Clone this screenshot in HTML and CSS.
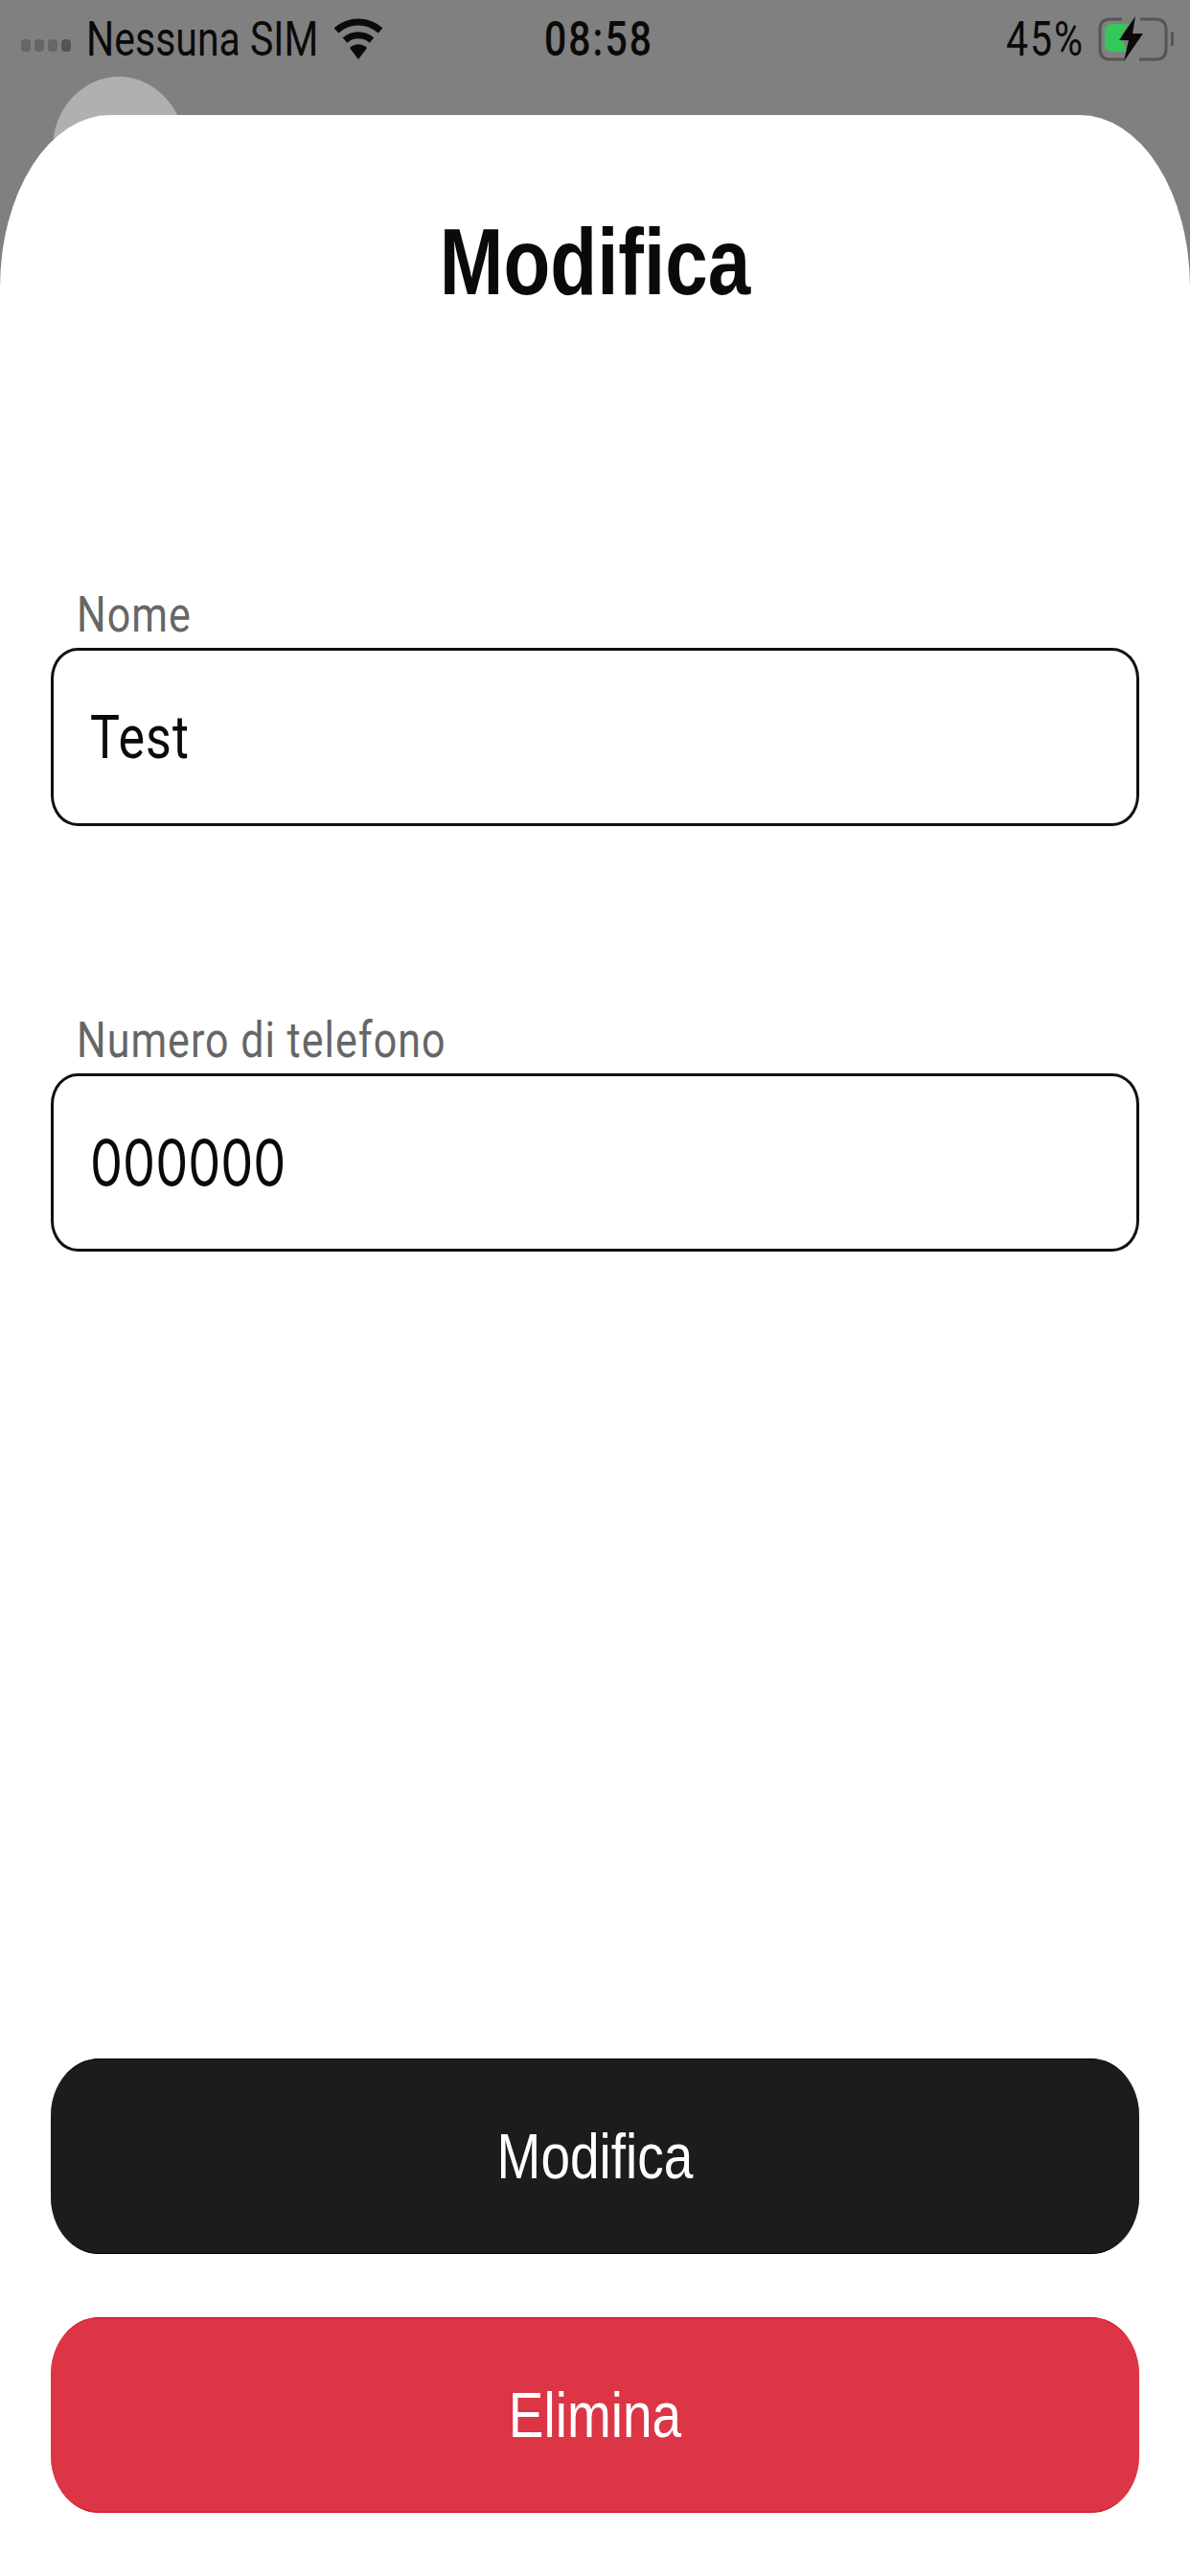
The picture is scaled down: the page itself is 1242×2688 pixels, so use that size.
FILE: index.html
```html
<!DOCTYPE html>
<html lang="it">
<head>
<meta charset="UTF-8">
<meta name="viewport" content="width=device-width, initial-scale=1.0">
<title>Modifica</title>
<link rel="stylesheet" href="styles.css">
</head>
<body>
<div class="screen">
    <div class="status-bar">
        <div class="status-left">
            <div class="signal">
                <span class="signal-dot"></span>
                <span class="signal-dot"></span>
                <span class="signal-dot"></span>
                <span class="signal-dot dark"></span>
            </div>
            <span class="stretch carrier">Nessuna SIM</span>
            <svg class="wifi" width="50" height="46" viewBox="0 0 50 46">
                <path d="M2 15 C15 3 35 3 48 15" fill="none" stroke="#0a0a0a" stroke-width="7"/>
                <path d="M11 25 C19 18 31 18 39 25" fill="none" stroke="#0a0a0a" stroke-width="7"/>
                <path d="M16 33 C21 28 29 28 34 33 L25 45 Z" fill="#0a0a0a"/>
            </svg>
        </div>
        <span class="stretch time">08:58</span>
        <div class="status-right">
            <span class="stretch percent">45%</span>
            <svg class="battery" width="82" height="48" viewBox="0 0 82 48">
                <path d="M25 3 H13 Q2 3 2 14 V34 Q2 45 13 45 H27 M43 45 H60 Q71 45 71 34 V14 Q71 3 60 3 H44" fill="none" stroke="#555" stroke-width="3"/>
                <path d="M15 8 H32 L24 20 L30 37 H15 Q7 37 7 29 V16 Q7 8 15 8 Z" fill="#34c759"/>
                <path d="M39 0 L22 25 H32 L27 47 L47 18 H36 Z" fill="#0a0a0a"/>
                <rect x="76" y="16" width="3" height="15" rx="1.5" fill="#555"/>
            </svg>
        </div>
    </div>
    <div class="avatar"></div>
    <div class="sheet">
        <div class="sheet-title"><span class="stretch">Modifica</span></div>
        <div class="form">
            <div class="field">
                <div class="field-label"><span class="stretch">Nome</span></div>
                <div class="field-box"><span class="stretch">Test</span></div>
            </div>
            <div class="field">
                <div class="field-label"><span class="stretch">Numero di telefono</span></div>
                <div class="field-box digits"><span class="stretch">000000</span></div>
            </div>
        </div>
        <div class="actions">
            <button class="btn btn-dark"><span class="stretch">Modifica</span></button>
            <button class="btn btn-red"><span class="stretch">Elimina</span></button>
        </div>
    </div>
</div>
</body>
</html>
```

FILE: styles.css
```css
html, body {
    margin: 0;
    padding: 0;
    background-color: #808080;
}
.screen {
    position: relative;
    width: 1242px;
    height: 2688px;
    overflow: hidden;
    display: flex;
    flex-direction: column;
    font-family: Roboto, sans-serif;
}
.stretch {
    display: inline-block;
    transform: scaleY(1.22);
    white-space: nowrap;
}
.status-bar {
    height: 120px;
    flex-shrink: 0;
    display: grid;
    grid-template-columns: 1fr auto 1fr;
    padding: 0 14px 38px 22px;
    box-sizing: border-box;
    align-items: center;
    color: #0a0a0a;
    font-size: 41px;
}
.status-left {
    display: flex;
    align-items: center;
}
.signal {
    display: flex;
    gap: 4px;
    margin-top: 12px;
    margin-right: 16px;
}
.signal-dot {
    width: 10px;
    height: 13px;
    border-radius: 4px;
    background-color: #666;
}
.signal-dot.dark {
    background-color: #555;
}
.wifi {
    margin-left: 17px;
    margin-top: -2px;
}
.time {
    font-weight: 500;
    letter-spacing: 2px;
}
.percent {
    letter-spacing: 2px;
}
.status-right {
    display: flex;
    align-items: center;
    justify-content: flex-end;
}
.battery {
    margin-left: 14px;
}
.avatar {
    position: absolute;
    left: 55px;
    top: 80px;
    width: 138px;
    height: 150px;
    border-radius: 50%;
    background-color: #b0b0b0;
}
.sheet {
    position: relative;
    flex: 1;
    display: flex;
    flex-direction: column;
    padding: 0 53px 66px;
    background-color: #fff;
    border-radius: 115px 115px 0 0 / 180px 180px 0 0;
}
.sheet-title {
    height: 308px;
    display: flex;
    align-items: center;
    justify-content: center;
    font-family: "Liberation Sans", Arial, sans-serif;
    font-size: 80px;
    font-weight: 700;
    color: #0a0a0a;
}
.form {
    display: flex;
    flex-direction: column;
    gap: 198px;
    margin-top: 188px;
}
.field-label {
    height: 60px;
    padding-left: 27px;
    font-size: 43px;
    line-height: 50px;
    letter-spacing: 1px;
    color: #666;
}
.field-box {
    height: 186px;
    display: flex;
    align-items: center;
    padding-left: 38px;
    box-sizing: border-box;
    border: 3px solid #111;
    border-radius: 28px / 32px;
    font-size: 52px;
    letter-spacing: 1px;
    color: #0a0a0a;
}
.field-box.digits {
    font-family: Inter, sans-serif;
    font-size: 54px;
    letter-spacing: 0;
}
.actions {
    margin-top: auto;
    display: flex;
    flex-direction: column;
    gap: 66px;
}
.btn {
    height: 204px;
    padding: 0;
    border: none;
    border-top: 1px solid #000;
    border-bottom: 1px solid #000;
    border-radius: 50px / 60px;
    font-family: "Liberation Sans", Arial, sans-serif;
    font-size: 55px;
    color: #fff;
}
.btn-dark {
    background-color: #1c1c1e;
}
.btn-red {
    background-color: #dc3545;
    border-color: #d0021b;
}
```
